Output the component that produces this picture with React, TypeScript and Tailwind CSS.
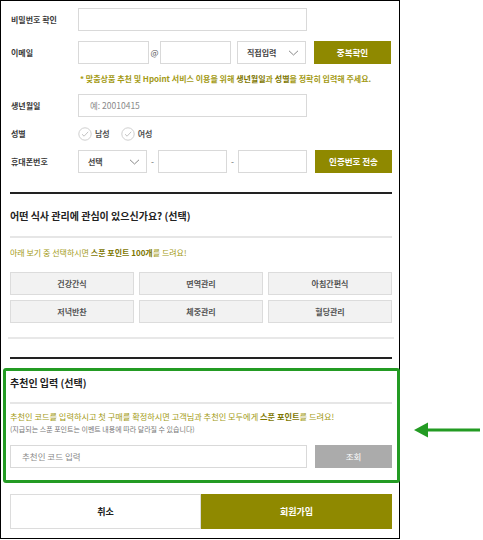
import React from "react";

const olive = "bg-[#8f8900]";

function Chevron() {
  return (
    <svg width="11" height="6" viewBox="0 0 11 6" fill="none">
      <path d="M1 0.8 L5.5 5 L10 0.8" stroke="#888" strokeWidth="1" />
    </svg>
  );
}

function CheckCircle() {
  return (
    <svg width="14" height="14" viewBox="0 0 14 14" fill="none">
      <circle cx="7" cy="7" r="6.2" stroke="#cfcfcf" strokeWidth="1" fill="#fff" />
      <path d="M4 7.2 L6.1 9.2 L10.2 4.8" stroke="#c4c4c4" strokeWidth="1" />
    </svg>
  );
}

function Label({ children }: { children: React.ReactNode }) {
  return (
    <div className="w-[68px] shrink-0 pl-[1px] text-[8px] font-bold text-[#3a3a3a]">
      {children}
    </div>
  );
}

function Input({ w, placeholder }: { w: string; placeholder?: string }) {
  return (
    <div
      className={`${w} h-[23px] shrink-0 border border-[#d9d9d9] bg-white flex items-center pl-[11px] text-[8.5px] text-[#8a8a8a]`}
    >
      {placeholder}
    </div>
  );
}

function Select({ w, text }: { w: string; text: string }) {
  return (
    <div
      className={`${w} h-[23px] shrink-0 border border-[#d9d9d9] bg-white flex items-center justify-between pl-[9px] pr-[6px] text-[8px] font-bold text-[#444]`}
    >
      <span>{text}</span>
      <Chevron />
    </div>
  );
}

function OliveButton({ children }: { children: React.ReactNode }) {
  return (
    <div
      className={`ml-[8px] w-[77px] h-[23px] shrink-0 ${olive} flex items-center justify-center text-[8.5px] font-bold text-white`}
    >
      {children}
    </div>
  );
}

const meals = ["건강간식", "면역관리", "아침간편식", "저녁반찬", "체중관리", "혈당관리"];

export default function App() {
  return (
    <div className="relative w-[483px] h-[540px] bg-white font-['Noto_Sans_CJK_KR','Noto_Sans',sans-serif] overflow-hidden">
      {/* ---------- FORM FRAME ---------- */}
      <div className="w-[400px] h-[539px] border border-black pl-[9px] pr-[7px] pt-[7px]">
        {/* password confirm */}
        <div className="flex items-center h-[23px]">
          <Label>비밀번호 확인</Label>
          <Input w="w-[229px]" />
        </div>

        {/* email */}
        <div className="flex items-center h-[23px] mt-[10px]">
          <Label>이메일</Label>
          <Input w="w-[71px]" />
          <div className="w-[11px] text-center text-[8.5px] text-[#555]">@</div>
          <Input w="w-[71px]" />
          <div className="ml-[6px]">
            <Select w="w-[69px]" text="직접입력" />
          </div>
          <OliveButton>중복확인</OliveButton>
        </div>

        <div className="mt-[8px] h-[14px] flex items-center pl-[70px] text-[8px] font-bold text-[#a39a14] whitespace-nowrap">
          * 맞춤상품 추천 및 Hpoint 서비스 이용을 위해&nbsp;
          <span className="text-[#7d7600]">생년월일</span>과&nbsp;
          <span className="text-[#7d7600]">성별</span>을 정확히 입력해 주세요.
        </div>

        {/* birth */}
        <div className="flex items-center h-[23px] mt-[8px]">
          <Label>생년월일</Label>
          <Input w="w-[229px]" placeholder="예: 20010415" />
        </div>

        {/* gender */}
        <div className="flex items-center h-[16px] mt-[9px]">
          <Label>성별</Label>
          <div className="flex items-center gap-[3px] text-[8px] font-bold text-[#555]">
            <CheckCircle />
            <span>남성</span>
          </div>
          <div className="flex items-center gap-[3px] ml-[11px] text-[8px] font-bold text-[#555]">
            <CheckCircle />
            <span>여성</span>
          </div>
        </div>

        {/* phone */}
        <div className="flex items-center h-[23px] mt-[8px]">
          <Label>휴대폰번호</Label>
          <Select w="w-[69px]" text="선택" />
          <div className="w-[11px] text-center text-[8.5px] text-[#666]">-</div>
          <Input w="w-[69px]" />
          <div className="w-[11px] text-center text-[8.5px] text-[#666]">-</div>
          <Input w="w-[69px]" />
          <OliveButton>인증번호 전송</OliveButton>
        </div>

        <div className="mt-[19px] h-[2px] bg-[#222]" />

        {/* ---------- MEAL INTEREST ---------- */}
        <div className="mt-[10px] h-[22px] flex items-center text-[10px] font-bold text-[#222]">
          어떤 식사 관리에 관심이 있으신가요? (선택)
        </div>
        <div className="mt-[10px] h-[2px] bg-[#e6e6e6]" />
        <div className="mt-[9px] h-[12px] flex items-center text-[8px] text-[#a39a14]">
          아래 보기 중 선택하시면&nbsp;
          <span className="font-bold text-[#7d7600]">스푼 포인트 100개</span>를 드려요!
        </div>
        <div className="mt-[13px] grid grid-cols-3 gap-x-[5px] gap-y-[5px]">
          {meals.map((m) => (
            <div
              key={m}
              className="h-[23px] bg-[#f2f2f2] border border-[#dcdcdc] flex items-center justify-center text-[8px] font-bold text-[#555]"
            >
              {m}
            </div>
          ))}
        </div>
        <div className="mt-[14px] h-[2px] bg-[#e8e8e8] mx-[-2px]" />
        <div className="mt-[18px] h-[2px] bg-[#222]" />

        {/* ---------- REFERRER ---------- */}
        <div className="mt-[12px] h-[22px] flex items-center text-[10px] font-bold text-[#222]">
          추천인 입력 (선택)
        </div>
        <div className="mt-[9px] h-[2px] bg-[#e6e6e6]" />
        <div className="mt-[6px] h-[12px] flex items-center text-[8.2px] text-[#a39a14] whitespace-nowrap">
          추천인 코드를 입력하시고 첫 구매를 확정하시면 고객님과 추천인 모두에게&nbsp;
          <span className="font-bold text-[#7d7600]">스푼 포인트</span>를 드려요!
        </div>
        <div className="mt-[2px] h-[11px] flex items-center text-[7px] text-[#777]">
          (지급되는 스푼 포인트는 이벤트 내용에 따라 달라질 수 있습니다)
        </div>
        <div className="mt-[10px] flex items-center h-[23px]">
          <Input w="w-[297px]" placeholder="추천인 코드 입력" />
          <div className="ml-[8px] w-[77px] h-[23px] bg-[#ababab] flex items-center justify-center text-[8.5px] text-white">
            조회
          </div>
        </div>

        {/* ---------- BOTTOM BUTTONS ---------- */}
        <div className="mt-[26px] grid grid-cols-2 h-[35px]">
          <div className="border border-[#dcdcdc] bg-white flex items-center justify-center text-[9px] font-bold text-[#222]">
            취소
          </div>
          <div className={`${olive} flex items-center justify-center text-[9px] font-bold text-white`}>
            회원가입
          </div>
        </div>
      </div>

      {/* ---------- ANNOTATION ---------- */}
      <div className="absolute left-[3px] top-[368px] w-[397px] h-[115px] border-[3px] border-[#239b23] rounded-[3px]" />
      <svg className="absolute left-[414px] top-[422px]" width="68" height="16" viewBox="0 0 68 16">
        <line x1="12" y1="8" x2="66" y2="8" stroke="#239b23" strokeWidth="3" />
        <polygon points="0,8 14,0.5 14,15.5" fill="#239b23" />
      </svg>
    </div>
  );
}
